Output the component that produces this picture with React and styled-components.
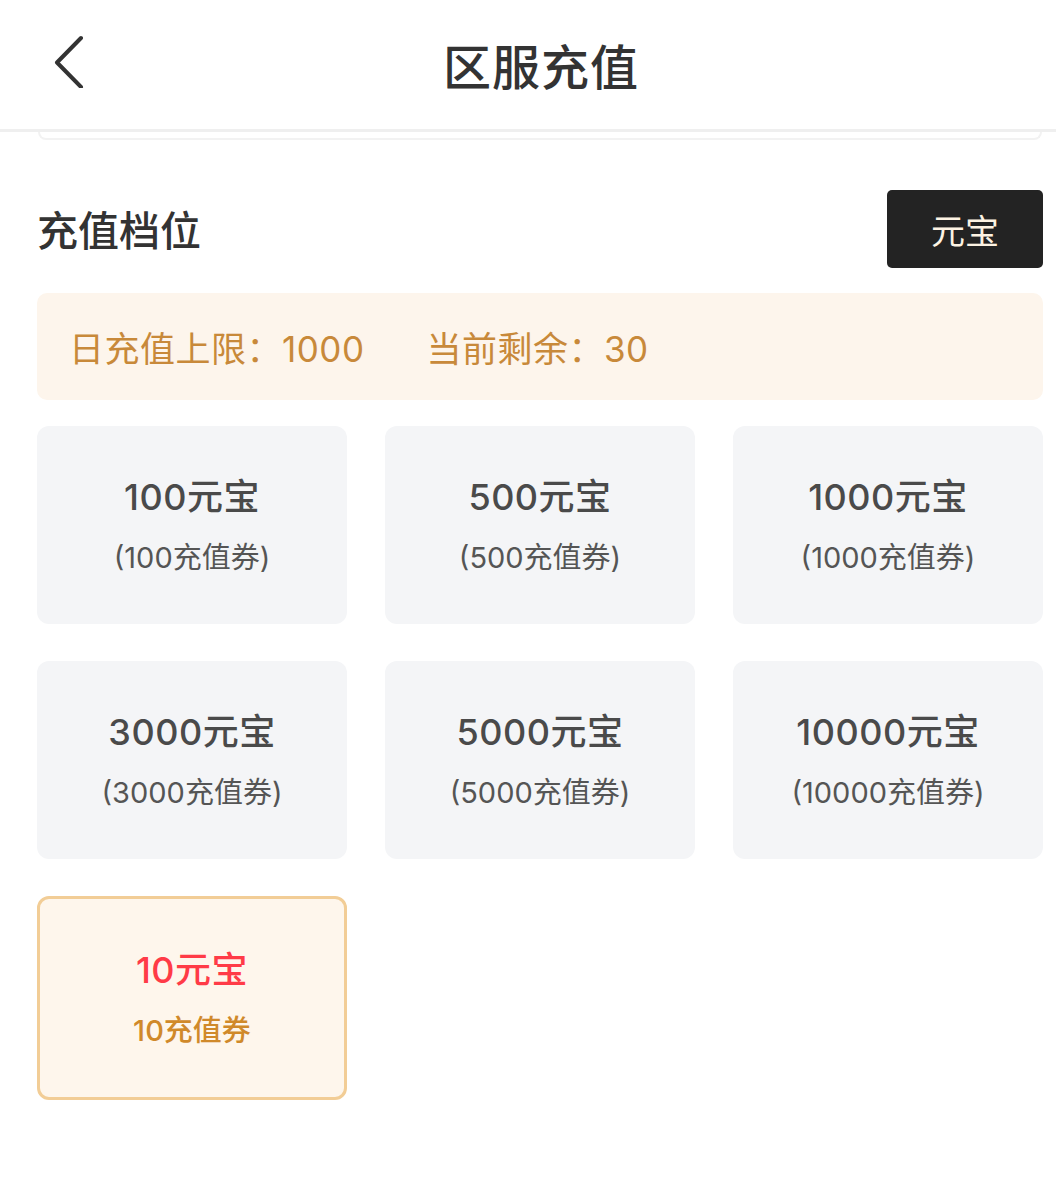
import React from 'react';
import styled, { createGlobalStyle } from 'styled-components';

const GlobalStyle = createGlobalStyle`
  html, body {
    margin: 0;
    padding: 0;
    background: #fff;
  }
  body {
    font-family: Inter, "Noto Sans CJK SC", "Noto Sans", sans-serif;
    color: #333;
  }
  * { box-sizing: border-box; }
`;

const tiers = [
  { amount: 100, coupon: 100 },
  { amount: 500, coupon: 500 },
  { amount: 1000, coupon: 1000 },
  { amount: 3000, coupon: 3000 },
  { amount: 5000, coupon: 5000 },
  { amount: 10000, coupon: 10000 },
  { amount: 10, coupon: 10, active: true },
];

const Page = () => {
  return (
    <Wrap>
      <GlobalStyle />
      <Header>
        <BackBtn aria-label="返回">
          <svg width="34" height="58" viewBox="0 0 34 58">
            <path d="M28 8 L4 32.5 L28 57" fill="none" stroke="#333" strokeWidth="4" strokeLinecap="round" strokeLinejoin="round" />
          </svg>
        </BackBtn>
        <Title>区服充值</Title>
      </Header>
      <Content>
        <ServerCardEdge />
        <SectionHead>
          <SectionTitle>充值档位</SectionTitle>
          <UnitBtn>元宝</UnitBtn>
        </SectionHead>
        <Notice>
          <span>日充值上限：1000</span>
          <NoticeItem>当前剩余：30</NoticeItem>
        </Notice>
        <Grid>
          {tiers.map((t) => (
            <Tier key={t.amount} active={t.active}>
              <TierAmount active={t.active}>{t.amount}元宝</TierAmount>
              <TierCoupon active={t.active}>
                {t.active ? `${t.coupon}充值券` : `(${t.coupon}充值券)`}
              </TierCoupon>
            </Tier>
          ))}
        </Grid>
      </Content>
    </Wrap>
  );
};

const Wrap = styled.div`
  width: 1056px;
  min-height: 1204px;
  background: #fff;
`;

const Header = styled.header`
  position: relative;
  height: 132px;
  display: flex;
  align-items: center;
  justify-content: center;
  border-bottom: 3px solid #efefef;
  padding-bottom: 2px;
`;

const BackBtn = styled.div`
  position: absolute;
  left: 53px;
  top: 30px;
  width: 34px;
  height: 62px;
`;

const Title = styled.h1`
  margin: 0;
  font-size: 48px;
  font-weight: 500;
  color: #333;
  letter-spacing: 1px;
  margin-left: 26px;
`;

const Content = styled.div`
  padding: 0 13px 0 37px;
`;

const ServerCardEdge = styled.div`
  height: 8px;
  margin: 0 1px 0 1px;
  border: 2px solid #f2f2f2;
  border-top: none;
  border-radius: 0 0 14px 14px;
`;

const SectionHead = styled.div`
  margin-top: 50px;
  height: 78px;
  display: flex;
  align-items: center;
  justify-content: space-between;
`;

const SectionTitle = styled.h2`
  margin: 0;
  font-size: 41px;
  font-weight: 500;
  color: #333;
  margin-top: -2px;
`;

const UnitBtn = styled.div`
  width: 156px;
  height: 78px;
  background: #232323;
  border-radius: 5px;
  color: #fdf3e3;
  font-size: 34px;
  display: flex;
  align-items: center;
  justify-content: center;
`;

const Notice = styled.div`
  margin-top: 25px;
  height: 107px;
  background: #fdf5ec;
  border-radius: 10px;
  display: flex;
  align-items: center;
  padding-left: 32px;
  font-size: 35px;
  letter-spacing: 0.5px;
  color: #c8893a;
`;

const NoticeItem = styled.span`
  margin-left: 62px;
`;

const Grid = styled.div`
  margin-top: 26px;
  display: grid;
  grid-template-columns: repeat(3, 310px);
  column-gap: 38px;
  row-gap: 37px;
  align-items: start;
`;

const Tier = styled.div`
  height: ${(p) => (p.active ? '204px' : '198px')};
  border-radius: 12px;
  background: ${(p) => (p.active ? '#fef6ec' : '#f4f5f7')};
  border: ${(p) => (p.active ? '3px solid #f2cd96' : 'none')};
  display: flex;
  flex-direction: column;
  align-items: center;
  justify-content: center;
  gap: 21px;
`;

const TierAmount = styled.div`
  font-size: 36px;
  font-weight: 500;
  line-height: 44px;
  letter-spacing: 0.5px;
  color: ${(p) => (p.active ? '#ff3b47' : '#4a4a4a')};
`;

const TierCoupon = styled.div`
  font-size: 29px;
  line-height: 36px;
  font-weight: ${(p) => (p.active ? 500 : 400)};
  color: ${(p) => (p.active ? '#d0892a' : '#555')};
`;

export default Page;
